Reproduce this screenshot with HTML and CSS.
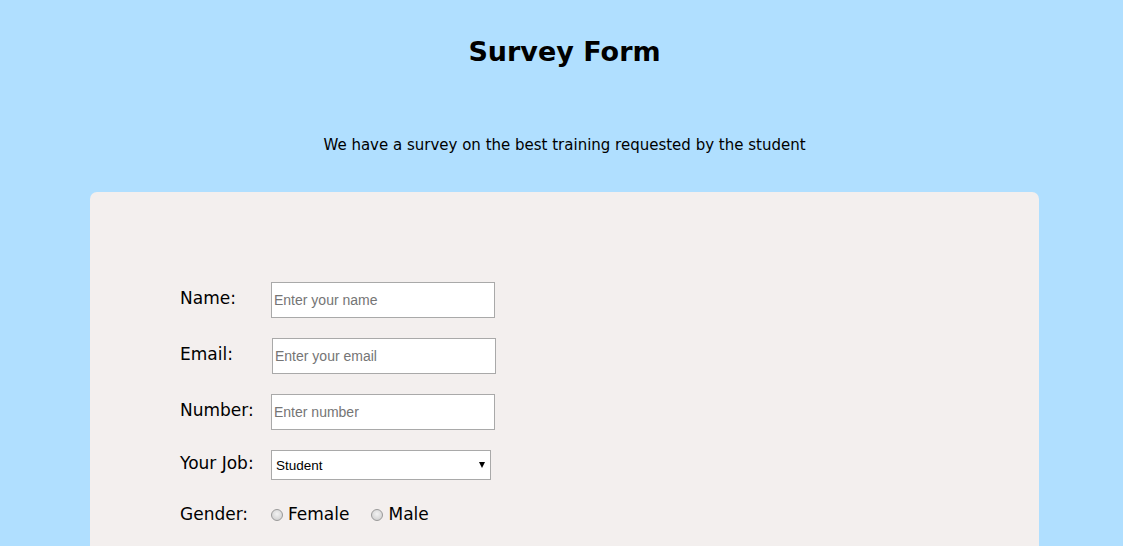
FILE: index.html
```html
<!DOCTYPE html>
<html lang="en">
<head>
<meta charset="utf-8">
<title>Survey Form</title>
<link rel="stylesheet" href="styles.css">
</head>
<body>
<header class="header">
  <h1 class="title">Survey Form</h1>
  <p class="subtitle">We have a survey on the best training requested by the student</p>
</header>
<main class="card">
  <form class="form">
    <div class="row">
      <label class="label" for="name">Name:</label>
      <input class="field" id="name" type="text" placeholder="Enter your name">
    </div>
    <div class="row">
      <label class="label label-email" for="email">Email:</label>
      <input class="field" id="email" type="email" placeholder="Enter your email">
    </div>
    <div class="row">
      <label class="label" for="number">Number:</label>
      <input class="field" id="number" type="text" placeholder="Enter number">
    </div>
    <div class="row row-job">
      <label class="label" for="job">Your Job:</label>
      <span class="select-wrap">
        <select class="select" id="job">
          <option>Student</option>
          <option>Teacher</option>
          <option>Other</option>
        </select>
      </span>
    </div>
    <div class="row row-gender">
      <span class="label label-gender">Gender:</span>
      <label class="radio-opt"><input class="radio" type="radio" name="gender"> Female</label>
      <label class="radio-opt"><input class="radio" type="radio" name="gender"> Male</label>
    </div>
  </form>
</main>
</body>
</html>
```
FILE: styles.css
```css
html, body {
  margin: 0;
  padding: 0;
}
body {
  background: #b0dfff;
  font-family: "Comic Sans MS", "DejaVu Sans", sans-serif;
  color: #000;
  height: 546px;
  overflow: hidden;
}
.header {
  text-align: center;
  padding-left: 6px;
}
.title {
  margin: 0;
  padding-top: 32px;
  height: 40px;
  font-size: 27px;
  line-height: 40px;
  font-weight: bold;
}
.subtitle {
  margin: 0;
  padding-top: 63px;
  font-size: 15px;
  line-height: 20px;
}
.card {
  margin: 37px 0 0 90px;
  width: 949px;
  height: 354px;
  background: #f3efee;
  border-radius: 7px 7px 0 0;
  box-sizing: border-box;
  padding: 90px 0 0 90px;
}
.form {
  display: flex;
  flex-direction: column;
}
.row {
  display: flex;
  align-items: center;
  height: 36px;
  margin-bottom: 20px;
}
.row-job {
  height: 30px;
  margin-bottom: 20px;
}
.label {
  width: 91px;
  font-size: 17px;
  line-height: 20px;
  margin-top: -4px;
  flex: none;
}
.label-email {
  width: 92px;
}
.label-gender {
  margin-top: -1px;
}
.field {
  width: 224px;
  height: 36px;
  box-sizing: border-box;
  border: 1px solid #a9a9a9;
  background: #fff;
  padding: 0 2px;
  font-family: "Liberation Sans", Arial, sans-serif;
  font-size: 14px;
  margin: 0;
}
.field::placeholder {
  color: #757575;
}
.select-wrap {
  position: relative;
  display: inline-block;
}
.select-wrap::after {
  content: "";
  position: absolute;
  right: 6px;
  top: 12px;
  border-left: 3px solid transparent;
  border-right: 3px solid transparent;
  border-top: 6px solid #000;
  pointer-events: none;
}
.select {
  appearance: none;
  -webkit-appearance: none;
  width: 220px;
  height: 30px;
  box-sizing: border-box;
  border: 1px solid #a9a9a9;
  border-radius: 0;
  background: #fff;
  padding: 0 4px;
  font-family: "Liberation Sans", Arial, sans-serif;
  font-size: 13.5px;
  color: #000;
  margin: 0;
}
.row-gender {
  height: 28px;
}
.radio-opt {
  display: flex;
  align-items: center;
  font-size: 17px;
  margin-right: 22px;
  margin-top: -1px;
}
.radio {
  appearance: none;
  -webkit-appearance: none;
  width: 12px;
  height: 12px;
  margin: 2px 5px 0 0;
  border-radius: 50%;
  border: 1px solid #9a9a9a;
  background: radial-gradient(circle at 50% 40%, #f2f2f2 0%, #d6d6d6 70%, #c8c8c8 100%);
  box-sizing: border-box;
}
```
